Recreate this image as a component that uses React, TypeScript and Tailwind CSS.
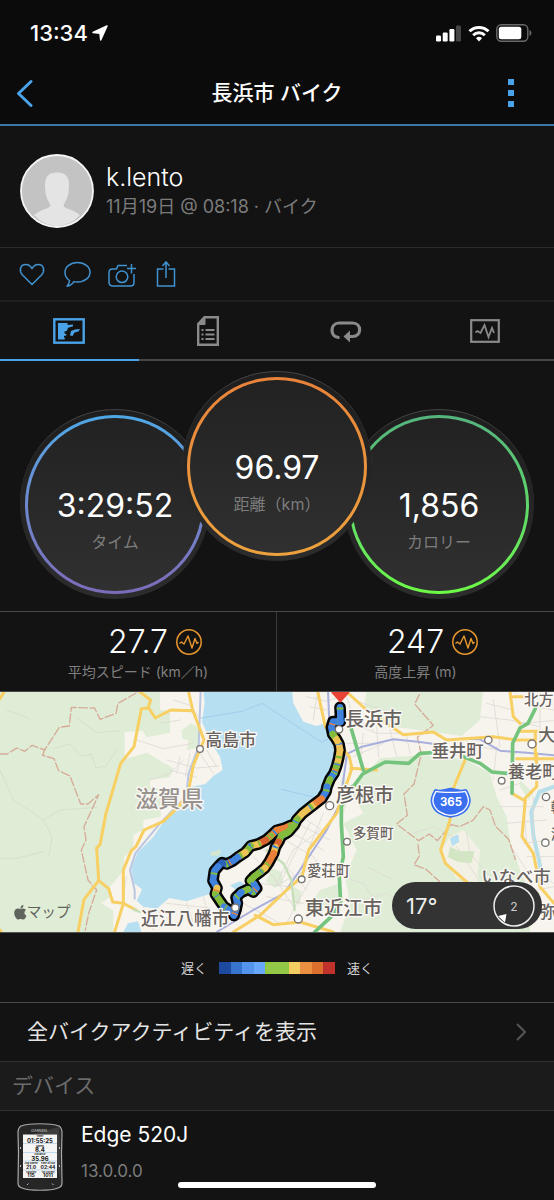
import type { ReactNode } from 'react';
import { FaApple } from 'react-icons/fa';

type DialProps = {
  value: string;
  label: string;
  ring: string;
  className?: string;
};

function Dial({ value, label, ring, className = '' }: DialProps) {
  return (
    <div className={`size-[190px] shrink-0 rounded-full border-t border-[#454545] bg-linear-to-b from-[#1e1e1e] to-[#2c2c2c] p-[5px] ${className}`}>
      <div className={`size-full rounded-full bg-linear-to-b p-[3px] ${ring}`}>
        <div className="flex size-full flex-col items-center rounded-full bg-linear-to-b from-[#222222] to-[#303030] pt-[68px]">
          <span className="text-[32px] leading-10 text-white">{value}</span>
          <span className="text-base leading-8 text-[#7c7c7c]">{label}</span>
        </div>
      </div>
    </div>
  );
}

function PulseIcon() {
  return (
    <svg viewBox="0 0 26 26" className="ml-2 size-[26px]" fill="none" stroke="#e8962e" aria-hidden="true">
      <circle cx="13" cy="13" r="12.2" strokeWidth="1.5" />
      <path d="M3.5 14.5l2-1.5 2.5 2L12 7l4 12 3-9.500 2 5 1.500-1.500" strokeWidth="1.4" strokeLinejoin="round" />
    </svg>
  );
}

function Stat({ value, label }: { value: string; label: string }) {
  return (
    <div className="flex flex-col items-center justify-center pt-1">
      <div className="grid w-full grid-cols-[1fr_auto_1fr] items-center">
        <span />
        <span className="text-[32px] font-light leading-9 text-white">{value}</span>
        <PulseIcon />
      </div>
      <span className="text-sm leading-6 text-[#808080]">{label}</span>
    </div>
  );
}

function Tab({ label, active = false, children }: { label: string; active?: boolean; children: ReactNode }) {
  return (
    <button
      type="button"
      aria-label={label}
      className={`flex h-[59px] flex-1 items-center justify-center border-b-2 ${active ? 'border-[#4aa3e8] text-[#4aa3e8]' : 'border-[#454747] text-[#8a8a8a]'}`}>
      {children}
    </button>
  );
}

const BLUE = '#4083de';
const DEEP = '#2c62b8';
const GREEN = '#83bb3d';
const YELLOW = '#ecc354';
const ORANGE = '#e9813a';
const RED = '#d96330';

const trackNorth: [string, string][] = [
  [BLUE, '480,52 481,70 481,95'],
  [BLUE, '481,95 459,95 454,112 458,132'],
  [GREEN, '458,132 468,146'],
  [YELLOW, '468,146 477,162 480,180'],
  [YELLOW, '480,180 476,205 470,228'],
  [GREEN, '470,228 462,250'],
  [BLUE, '462,250 450,268'],
  [GREEN, '450,268 441,290'],
  [BLUE, '441,290 438,305 425,326'],
  [ORANGE, '425,326 400,345'],
  [YELLOW, '400,345 368,370 350,390'],
  [GREEN, '350,390 343,405 325,426 306,435'],
];

const trackWest: [string, string][] = [
  [ORANGE, '333,406 312,415 290,421'],
  [ORANGE, '290,421 272,438'],
  [GREEN, '272,438 258,450'],
  [RED, '258,450 235,462'],
  [YELLOW, '235,462 212,468'],
  [GREEN, '212,468 196,487'],
  [YELLOW, '196,487 176,500'],
  [BLUE, '176,500 160,512 140,522'],
  [DEEP, '140,522 126,518 114,530'],
  [BLUE, '114,530 103,543 99,572'],
  [BLUE, '99,572 111,594'],
  [YELLOW, '111,594 106,612'],
  [GREEN, '106,612 122,636 132,650'],
  [BLUE, '132,650 148,660 162,676'],
];

const trackEast: [string, string][] = [
  [BLUE, '318,430 304,438'],
  [GREEN, '304,438 296,455'],
  [RED, '296,455 286,472'],
  [YELLOW, '286,472 281,490'],
  [ORANGE, '281,490 266,518 255,534'],
  [YELLOW, '255,534 242,545'],
  [GREEN, '242,545 222,560 211,572'],
  [GREEN, '211,572 222,582'],
  [BLUE, '222,582 230,595 220,606 204,598'],
  [GREEN, '204,598 184,607'],
  [BLUE, '184,607 168,622 172,640'],
  [BLUE, '172,640 168,660 162,676'],
];

function Track({ segments }: { segments: [string, string][] }) {
  const whole = segments.map(([, points]) => points).join(' ');
  return (
    <>
      {segments.map(([color, points]) => (
        <polyline key={points} points={points} stroke={color} strokeWidth="20" />
      ))}
      <polyline points={whole} stroke={GREEN} strokeWidth="20" strokeDasharray="7 44 4 53 6 61" strokeLinecap="butt" />
      <polyline points={whole} stroke={BLUE} strokeWidth="20" strokeDasharray="4 67 5 82 3 58" strokeDashoffset="20" strokeLinecap="butt" />
      <polyline points={whole} stroke={ORANGE} strokeWidth="20" strokeDasharray="4 117 4 142" strokeDashoffset="50" strokeLinecap="butt" />
    </>
  );
}

const places: [string, number, number, number][] = [
  ['高島市', 616, 169, 51],
  ['近江八幡市', 423, 706, 53],
  ['長浜市', 1035, 107, 57],
  ['彦根市', 1007, 337, 58],
  ['多賀町', 1058, 445, 41],
  ['愛荘町', 921, 559, 43],
  ['東近江市', 914, 676, 58],
  ['垂井町', 1295, 200, 52],
  ['養老町', 1523, 264, 52],
  ['北方', 1572, 46, 44],
  ['大', 1614, 152, 52],
  ['いなべ市', 1444, 580, 52],
  ['弥', 1618, 684, 50],
  ['輪', 1652, 366, 42],
  ['海', 1652, 446, 42],
];

const townDots: [number, number, number][] = [
  [600, 177, 10],
  [706, 653, 11],
  [1017, 118, 11],
  [989, 347, 12],
  [1041, 455, 10],
  [905, 568, 10],
  [895, 687, 12],
  [1465, 150, 11],
  [1596, 162, 12],
  [1505, 272, 10],
  [1638, 321, 11],
  [1636, 458, 11],
];

function RouteMap() {
  return (
    <svg viewBox="0 6 1662 720" className="block w-full" fill="none" strokeLinejoin="round" strokeLinecap="round" role="img" aria-label="ルートマップ">
      <rect y="6" width="1662" height="720" fill="#f7f4ed" />

      {/* forest */}
      <g fill="#e0edd6">
        <path d="M0 0H480V60L510 62V128L440 142 428 122 374 126V208L440 188 520 235 510 262 450 270V290L482 296V380L430 390V420L400 434V482L372 500V540L330 590V620L304 640 340 662V730H0z" />
        <path d="M545 120l28-20 22 12 6 60-40 8 4-30-18-4z" />
        <path d="M1100 0H1450L1440 90 1385 138 1300 126 1190 112 1092 62z" />
        <path d="M1140 205L1265 195 1395 208 1470 250 1490 320 1520 380 1530 450 1560 540 1590 610 1590 730H1020L1050 640 1035 560 1070 480 1030 400 1090 370 1050 300z" />
        <path d="M1030 250l-16 70 14 60 20-70zM1560 270l40 40-14 20-26-40zM960 600l60-20 10 60-60 20-30-30z" />
        <path d="M815 535l30 10 4 36-24 12-28-20zM880 590l24 14-4 40-24-10z" />
      </g>
      <path d="M1350 440l40-20 50 60-10 96-60-10-50-80z" fill="#f3f1e6" />
      <path d="M1350 470l30 14 44 0-10 36-40-4-30-14z" fill="#d2e6c4" />

      {/* lake */}
      <path
        d="M610 0L614 40 606 96 634 160 660 200 668 240 640 258 616 282 576 290 566 324 530 362 490 396 460 440 412 488 394 536 402 580 426 598 410 632 430 650 470 656 508 624 560 634 636 610 650 540 690 510 760 470 840 420 900 380 962 318 985 270 1005 210 1000 160 984 96 950 108 910 95 880 40 876 0z"
        fill="#b7dff2" />
      <path d="M384 700l30-6 10 32H370zM690 586l30-12 30 18-26 20zM1350 445l24-12 4 22-22 14z" fill="#b7dff2" />
      <path d="M604 84L726 64 787 40 844 78 964 156 984 148M844 298L970 328" stroke="#9fcdea" strokeWidth="3" />
      <path d="M632 488l32-10-6 18-24 2z" fill="#d5e8cf" />
      <path d="M1662 290l-44 16-24 60 6 70 16 70 14 74" stroke="#b7dfe9" strokeWidth="12" />

      {/* lanes */}
      <g stroke="#dddad5" strokeWidth="2.500">
        <path d="M160 176l50-14 34 36 30-6 14 42 30-6 34-50M230 84l60 44 70-6M0 240l40 90 90 60 50-30 110-8M130 390l26 50-10 60M0 505h50l80-20M20 60l70 26" stroke="#d3dccb" />
        <path d="M500 210l90 24 66-6M510 240l80 22M520 30l50 16 30 40M480 100l60-10M450 270l60-20 40-40M540 200l-10 50M570 190l-14 70M410 150l80 26 90-16M600 190l40 60M620 180l30 50" />
        <path d="M380 560l-10 60M430 650l30 70M470 660l60 50M560 640l20 60M610 620l20 70M500 640l130 14" />
        <path d="M760 500l60 60 60 90M790 480l70 50 60 70M820 590l120-60M840 440l100 60 40 60M860 420l110 60M890 400l100 50M880 480l-50 100M930 400l-90 180M970 370l-70 170M800 620l110 20M730 640l110 60M860 700l40-80M950 540l-60 100M960 420l-80 60M920 390l60 40M780 580l90 10" />
        <path d="M920 20l60 14 30-10M930 50l50 10M950 20l-10 70M1040 20l20 60 60 40M1060 100l70 30 70 0M1090 130l-10 90M1130 110l6 90M1040 160h100M1170 120l20 80M1220 140l10 50M1060 200l90-40M1320 160l60 40M1400 150l20 50" />
        <path d="M1440 80l90 10 90 20M1460 40l80 20M1480 30l20 140M1440 170l110 20M1490 170l-10 100M1500 300l60-20M1500 350l130 0M1520 400l120-10M1570 330l10 130M1600 320l0 140M1570 460l80-10M1580 500l82 0M1540 480l40 60M1600 50l62 10M1620 40l0 110M1560 100l100-8M1630 560l32 20M1610 600l52-10" />
        <path d="M1030 560l60 20 40 60M1060 640l100-30 80 60M1100 530l80 40M1240 430l60-20 60 30M1370 470l60 90M1400 430l10 60 60 70M1060 30l120 40" />
      </g>

      {/* prefecture borders */}
      <g stroke="#d6ab98" strokeWidth="4" strokeDasharray="26 8">
        <path d="M0 192l22 0 28-18 24 10 22-18 38 14 44-68 30-4 6-56 70 2 16 34 48-18 6-30 60-34" />
        <path d="M134 178l-6 18 34 10 14 36 34 16 32 84 22 0 32-28-44 96 6 40-14 30 20 90 26 30-24 70-10 50" />
        <path d="M1258 14l-14 28 56 64-48 36 12 50-22 90-30 30 10 64-32 26 66 50 32-20 24 20 26-30 16-18 24 6 40-18 32-42 20 10 16 48 40 40 20 60" />
        <path d="M1254 464l4 34-16 26 36 14 40 36 20 80-10 60" />
      </g>

      {/* railways */}
      <g stroke="#a8afdd" strokeWidth="6">
        <path d="M602 0L596 170 566 250 558 320 480 400 406 490 390 540 404 600 404 626" stroke="#b9c6e2" />
        <path d="M984 0L988 100 1024 200 1086 170 1180 148 1260 156 1330 166M1380 146l60 2 60 34 80 6 82 8M1040 200L1020 340 980 420 900 540 852 610 760 660 650 726" />
      </g>

      {/* trunk roads */}
      <g stroke="#f7cf62" strokeWidth="9">
        <path d="M0 26L12 6M420 6L452 30 444 54 424 56 402 170 362 220 318 370 300 464 290 474 296 572 252 628 234 726M446 54L466 84 512 60 576 62M566 6L578 60 612 150 580 226 566 300 540 346 490 394 432 420 408 470 394 482 370 540V640L344 726M296 572L326 596 338 636 370 640 408 660M0 720l4 6" />
        <path d="M952 0L976 110 1048 200 1056 235 1020 340 1010 370 926 480 906 560 860 600 780 676 700 726M766 676L820 704 900 696 1000 726M1052 235L1130 240" />
        <path d="M1040 6L1100 60 1210 134 1300 126 1340 150 1480 140 1550 150M1396 208L1358 300 1350 390 1322 480 1336 520 1400 576M1530 6L1540 80 1560 100M1540 20h40M1536 310L1570 330 1610 290 1610 190M1576 330L1566 440 1600 490 1620 590 1662 640M1550 206h112M1606 130v80M1560 124h60M1540 150h60" />
      </g>

      {/* expressways */}
      <g stroke="#75c47d" strokeWidth="11">
        <path d="M1052 110L1090 240M1060 290L1088 252 1156 216 1226 220 1260 190 1330 186M1390 200L1440 220 1476 246 1520 250M1536 310L1538 160 1560 114 1584 100 1606 56M1056 290L1024 350V400L1030 500 1018 560 1022 640 994 680 944 726" />
      </g>
      <path d="M400 658l20 8M800 480l50 40 24 50 10 90" stroke="#c5dfba" strokeWidth="7" />

      {/* ridden track */}
      <g transform="translate(540 0)">
        {[trackNorth, trackWest, trackEast].map((track, index) => (
          <polyline key={index} points={track.map(([, points]) => points).join(' ')} stroke="#050505" strokeWidth="35" />
        ))}
        <Track segments={trackWest} />
        <Track segments={trackEast} />
        <Track segments={trackNorth} />
        <path d="M455 0h53v8l-27 30-27-30z" fill="#e94335" />
      </g>

      {townDots.map(([x, y, r]) => (
        <circle key={`${x}-${y}`} cx={x} cy={y} r={r} fill="#fff" stroke="#77736f" strokeWidth="4" />
      ))}

      <path d="M1308 308C1325 314 1340 306 1352 304C1364 306 1380 314 1396 308C1404 322 1408 334 1404 344C1398 366 1376 378 1352 380C1328 378 1306 366 1300 344C1296 334 1300 322 1308 308z" transform="translate(0 -4)" fill="#3a6ff0" stroke="#3a6ff0" strokeWidth="14" />
      <path d="M1308 308C1325 312 1380 312 1396 308C1404 322 1408 334 1404 344C1398 366 1376 378 1352 380C1328 378 1306 366 1300 344C1296 334 1300 322 1308 308z" transform="translate(0 -4)" stroke="#fff" strokeWidth="4" />
      <text x="1353" y="347" textAnchor="middle" fontSize="34" fontWeight="700" fill="#fff">365</text>

      <g fill="#69635f" stroke="#fbf9f5" strokeWidth="8" fontWeight="500" style={{ paintOrder: 'stroke' }}>
        {places.map(([name, x, y, size]) => (
          <text key={name} x={x} y={y} fontSize={size}>{name}</text>
        ))}
        <text x="406" y="352" fontSize="68" fill="#98928e">滋賀県</text>
      </g>
      <FaApple x="36" y="642" size="50" color="#5f645c" stroke="none" />
      <text x="80" y="681" fontSize="44" fill="#5f645c">マップ</text>
    </svg>
  );
}

function DeviceImage() {
  return (
    <svg viewBox="0 0 46 68" className="w-[46px] shrink-0" role="img" aria-label="Edge 520J">
      <path d="M4 3C12 0 34 0 42 3Q45 5 45 10L44.500 30 45 60Q45 64 41 65C34 68 12 68 5 65Q1 64 1 60L1.500 30 1 10Q1 5 4 3z" fill="#262626" stroke="#a9a9a9" strokeWidth="1.2" />
      <path d="M42 4L43.500 28 43 56 40 40V11H16z" fill="#3c3c3c" />
      <text x="22" y="9" textAnchor="middle" fontSize="4" fill="#d0d0d0">GARMIN</text>
      <path d="M6 11.500h34V55H6z" fill="#f5f5f5" />
      <path d="M6 20.500h34M6 29.500h34M6 38h34M6 47h34" stroke="#9cc4e0" strokeWidth=".6" />
      <g fill="#181818" textAnchor="middle" fontWeight="700">
        <g fontSize="2.500">
          <text x="23" y="14">Timer</text>
          <text x="23" y="23.500">Speed</text>
          <text x="23" y="32">Distance</text>
          <text x="14" y="41">Avg Speed</text>
          <text x="31" y="41">Time of Day</text>
          <text x="14" y="49.500">Calories</text>
          <text x="31" y="49.500">Tot Ascent</text>
        </g>
        <g fontSize="6">
          <text x="23" y="19.500">01:55:25</text>
          <text x="23" y="28.500">8.4</text>
          <text x="23" y="37.500">35.96</text>
        </g>
        <g fontSize="5">
          <text x="14" y="46">21.0</text>
          <text x="31" y="46">02:44</text>
          <text x="14" y="54">115</text>
          <text x="31" y="54">1011</text>
        </g>
      </g>
      <path d="M10 62l1.500-1.500M35 60.500l1.500 1.500M3.500 24v2M42.500 24v2M3.500 42v2M42.500 42v2" stroke="#bdbdbd" />
    </svg>
  );
}

const legendColors = [
  'bg-[#1d4a9e]',
  'bg-[#3873cd]',
  'bg-[#5494ec]',
  'bg-[#69a7f8]',
  'bg-[#93c846]',
  'bg-[#93c846]',
  'bg-[#f3cd62]',
  'bg-[#eb9041]',
  'bg-[#dc6f2e]',
  'bg-[#c1322c]',
];

export default function App() {
  return (
    <div className="relative min-h-screen overflow-hidden bg-[#131313] font-['Inter','Noto_Sans_CJK_JP',sans-serif] text-white">
      <header className="border-b-2 border-[#3a78a8] bg-[#0b0b0b]">
        <div className="flex h-[66px] items-center justify-between pl-[30px] pr-[22px]">
          <div className="flex items-center gap-1">
            <span className="text-[22px] font-medium leading-8">13:34</span>
            <svg viewBox="0 0 16 16" className="size-4" fill="#fff" aria-hidden="true">
              <path d="M15 1L1 7.500l7 .8.700 6.700z" stroke="#fff" strokeWidth="1.500" strokeLinejoin="round" />
            </svg>
          </div>
          <div className="flex items-center gap-1.5">
            <svg viewBox="0 0 26 17" className="h-[17px] w-[26px]" fill="#fff" aria-hidden="true">
              <rect x="0" y="10.500" width="5" height="6" rx="1.200" />
              <rect x="6.700" y="7.500" width="5" height="9" rx="1.200" />
              <rect x="13.400" y="4" width="5" height="12.500" rx="1.200" />
              <rect x="20" y="0.500" width="5" height="16" rx="1.200" fill="#454545" />
            </svg>
            <svg viewBox="0 0 22 17" className="h-[17px] w-[22px]" fill="none" stroke="#fff" strokeWidth="3" aria-hidden="true">
              <path d="M1.500 6.300a13.500 13.500 0 0 1 19 0M5.200 10.200a8.300 8.300 0 0 1 11.600 0" />
              <path d="M11 16.500l-3-3.200a4.300 4.300 0 0 1 6 0z" fill="#fff" stroke="none" />
            </svg>
            <svg viewBox="0 0 36 18" className="h-[18px] w-9" aria-hidden="true">
              <rect x=".8" y=".8" width="31" height="16.400" rx="4.500" fill="none" stroke="#6a6a6a" strokeWidth="1.400" />
              <rect x="2.800" y="2.800" width="22.500" height="12.400" rx="2.500" fill="#fff" />
              <path d="M33.500 6v6q2-1 2-3t-2-3z" fill="#6a6a6a" />
            </svg>
          </div>
        </div>
        <div className="flex h-[58px] items-center justify-between px-4 pb-1">
          <button type="button" aria-label="戻る" className="w-[54px]">
            <svg viewBox="0 0 18 28" className="h-7 w-[18px]" fill="none" stroke="#4aa3e8" strokeWidth="3" strokeLinecap="round" strokeLinejoin="round">
              <path d="M15 2.500L2.500 14.500l12.500 12" />
            </svg>
          </button>
          <h1 className="text-[21px] font-medium leading-8">長浜市 バイク</h1>
          <button type="button" aria-label="メニュー" className="flex w-[54px] flex-col items-center gap-[5px]">
            <span className="size-1.5 bg-[#4aa3e8]" />
            <span className="size-1.5 bg-[#4aa3e8]" />
            <span className="size-1.5 bg-[#4aa3e8]" />
          </button>
        </div>
      </header>

      <section className="flex h-[122px] items-center gap-3 border-b border-[#2b2b2b] px-5 pt-2">
        <svg viewBox="0 0 74 74" className="size-[74px] shrink-0" role="img" aria-label="k.lento">
          <circle cx="37" cy="37" r="36" fill="#c3c3c3" />
          <path d="M25 31C25 22 29 18.500 37 18.500S49 22 49 31C49 43 46 46 43.500 51C43.500 55 51 54 60 61Q50 72 37 72T14 61C23 54 30.500 55 30.500 51C28 46 25 43 25 31z" fill="#e4e4e4" />
          <circle cx="37" cy="37" r="36" fill="none" stroke="#f5f5f5" strokeWidth="1.800" />
        </svg>
        <div className="flex flex-col">
          <span className="text-[25px] font-light leading-8">k.lento</span>
          <span className="text-lg leading-7 text-[#7c7c7c]">11月19日 @ 08:18 · バイク</span>
        </div>
      </section>

      <div className="flex h-[54px] items-center gap-[17px] border-b-2 border-[#202020] px-[18px] text-[#4192d0]">
        <button type="button" aria-label="いいね">
          <svg viewBox="0 0 28 28" className="size-7" fill="none" stroke="currentColor" strokeWidth="1.500" strokeLinejoin="round">
            <path d="M14 24.500L4.500 15C.8 11 2 4.500 7.800 4.500c3.200 0 5 2 6.200 4 1.200-2 3-4 6.200-4 5.800 0 7 6.500 3.300 10.500z" />
          </svg>
        </button>
        <button type="button" aria-label="コメント">
          <svg viewBox="0 0 28 28" className="size-7" fill="none" stroke="currentColor" strokeWidth="1.500" strokeLinejoin="round">
            <path d="M14.500 2.500c7 0 12.500 4.200 12.500 9.700s-5.500 9.800-12.500 9.800q-2 0-3.500-.4Q8 26 4 26.200q2.500-2.200 2.500-5.700C3.500 18.500 2 15.500 2 12.200c0-5.500 5.500-9.700 12.500-9.700z" />
          </svg>
        </button>
        <button type="button" aria-label="写真を追加">
          <svg viewBox="0 0 28 28" className="size-7" fill="none" stroke="currentColor" strokeWidth="1.500" strokeLinejoin="round">
            <path d="M19 5.500h-9L8.500 9H4.500Q1 9 1 12.500V22q0 4 4 4h17.500q3.500 0 3.500-3.500V14M23.500 4v9.500M19 8.500h9" />
            <circle cx="14" cy="16.800" r="5.800" />
          </svg>
        </button>
        <button type="button" aria-label="共有">
          <svg viewBox="0 0 28 28" className="size-7" fill="none" stroke="currentColor" strokeWidth="1.500">
            <path d="M10.500 9H4.500v17h17V9h-6M13 18V2M9.500 6L13 2l3.500 4" />
          </svg>
        </button>
      </div>

      <nav className="flex">
        <Tab label="概要" active>
          <svg viewBox="0 0 32 26" className="h-[26px] w-8">
            <rect x="1.300" y="1.300" width="29.400" height="23.400" fill="none" stroke="currentColor" strokeWidth="2.400" />
            <path d="M5 5h9.500v2l5.500-.5v1.800l-5 1.500-1 3-2.500.7v2l2 .5-.5 1.500-2 .5v1.500l1 .5-.5 1.500H5zM18 13l4-1.500 5-.5-1.500 2.500-4 1-2 3.500-2.500-.5z" fill="currentColor" />
          </svg>
        </Tab>
        <Tab label="詳細">
          <svg viewBox="0 0 22 30" className="h-[30px] w-[22px]" fill="none" stroke="currentColor">
            <path d="M7.500 1.200H20.800V28.800H1.200V8z" strokeWidth="2.400" />
            <path d="M8 1v7.500H1z" fill="currentColor" />
            <path d="M8.500 14h9M8.500 18.500h9M8.500 23h9M4.500 14h2M4.500 18.500h2M4.500 23h2" strokeWidth="1.800" />
          </svg>
        </Tab>
        <Tab label="ラップ">
          <svg viewBox="0 0 32 22" className="h-[22px] w-8" fill="none" stroke="currentColor" strokeWidth="3.200">
            <path d="M9.500 17.500H8.500C-.5 17 0 3 9 3H22.500C32 3 32 16.500 22.500 16.500H18" />
            <path d="M13.500 16.500l6.500-6v12z" fill="currentColor" stroke="none" />
          </svg>
        </Tab>
        <Tab label="グラフ">
          <svg viewBox="0 0 30 24" className="h-6 w-[30px]" fill="none" stroke="currentColor">
            <rect x="1.200" y="1.200" width="27.600" height="21.600" strokeWidth="2.200" />
            <path d="M5.500 13.500l2-1.500 3 2L14.500 6l4 12 3.500-9 2 5" strokeWidth="1.800" />
          </svg>
        </Tab>
      </nav>

      <section className="flex items-end justify-center px-5 pb-3">
        <Dial value="3:29:52" label="タイム" ring="from-[#4ea8e6] to-[#7c6bb8]" />
        <Dial value="96.97" label="距離（km）" ring="from-[#e8833a] to-[#eda23e]" className="z-10 -mx-7 mb-[38px] mt-2.5" />
        <Dial value="1,856" label="カロリー" ring="from-[#55b37d] to-[#6dfa45]" />
      </section>

      <section className="grid h-[81px] grid-cols-2 divide-x divide-[#3a3a3a] border-y border-[#4a4a4a]">
        <Stat value="27.7" label="平均スピード (km／h)" />
        <Stat value="247" label="高度上昇 (m)" />
      </section>

      <section className="relative">
        <RouteMap />
        <div className="absolute bottom-[3px] right-3 flex h-[47px] w-[150px] items-center justify-between rounded-full bg-[#333333] pl-3.5 pr-[7px]">
          <span className="text-[22px] leading-8 text-[#eeeeee]">17°</span>
          <svg viewBox="0 0 42 42" className="size-[42px]" role="img" aria-label="風 2">
            <circle cx="21" cy="21" r="20" fill="none" stroke="#eeeeee" strokeWidth="1.500" />
            <path d="M5 31l8.500-2-1.500 8.500z" fill="#fff" />
            <text x="21" y="25.500" textAnchor="middle" fontSize="12" fill="#cccccc">2</text>
          </svg>
        </div>
      </section>

      <div className="flex h-[70px] items-center justify-center border-t border-[#555555] text-[13px] leading-5 text-[#d0d0d0]">
        <span>遅く</span>
        <div className="mx-3 flex h-3 w-[116px]">
          {legendColors.map((color, index) => (
            <span key={index} className={`flex-1 ${color}`} />
          ))}
        </div>
        <span>速く</span>
      </div>

      <a href="#activities" className="flex h-[59px] items-center justify-between border-t border-[#4a4a4a] pl-[27px] pr-7">
        <span className="text-[21px] leading-8 text-[#e4e4e4]">全バイクアクティビティを表示</span>
        <svg viewBox="0 0 10 18" className="h-[18px] w-2.5" fill="none" stroke="#555555" strokeWidth="2" aria-hidden="true">
          <path d="M1 1l8 8-8 8" />
        </svg>
      </a>

      <h2 className="flex h-[50px] items-center border-y border-[#323232] bg-[#1b1b1b] px-3 text-[21px] leading-8 text-[#6c6c6c]">
        デバイス
      </h2>

      <section className="flex gap-[18px] px-[17px] pt-3">
        <DeviceImage />
        <div className="flex flex-col">
          <span className="text-[21px] leading-6">Edge 520J</span>
          <span className="mt-3 text-[17px] leading-6 text-[#7c7c7c]">13.0.0.0</span>
        </div>
      </section>

      <div className="absolute bottom-3 left-1/2 h-1.5 w-[198px] -translate-x-1/2 rounded-full bg-white" />
    </div>
  );
}
